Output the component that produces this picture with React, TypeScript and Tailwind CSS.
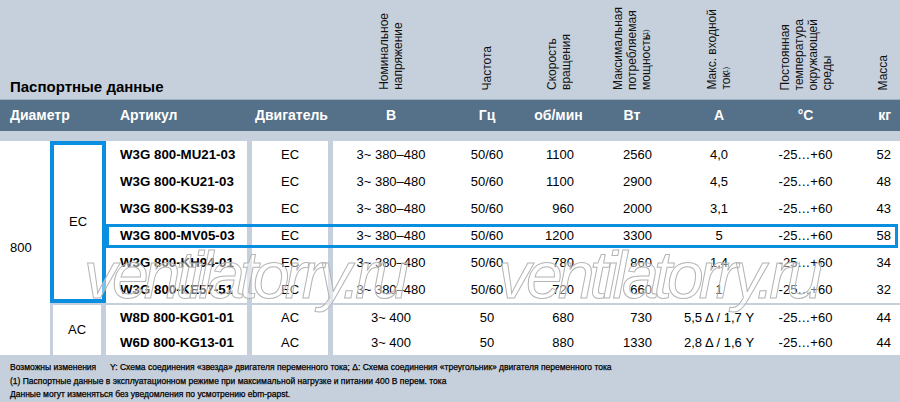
import React from "react";

type R = string[];

const ec: R[] = [
  ["W3G 800-MU21-03", "EC", "3~ 380–480", "50/60", "1100", "2560", "4,0", "-25…+60", "52"],
  ["W3G 800-KU21-03", "EC", "3~ 380–480", "50/60", "1100", "2900", "4,5", "-25…+60", "48"],
  ["W3G 800-KS39-03", "EC", "3~ 380–480", "50/60", "960", "2000", "3,1", "-25…+60", "43"],
  ["W3G 800-MV05-03", "EC", "3~ 380–480", "50/60", "1200", "3300", "5", "-25…+60", "58"],
  ["W3G 800-KH94-01", "EC", "3~ 380–480", "50/60", "780", "860", "1,4", "-25…+60", "34"],
  ["W3G 800-KE57-51", "EC", "3~ 380–480", "50/60", "720", "660", "1", "-25…+60", "32"],
];

const ac: R[] = [
  ["W8D 800-KG01-01", "AC", "3~ 400", "50", "680", "730", "5,5 Δ / 1,7 Y", "-25…+60", "44"],
  ["W6D 800-KG13-01", "AC", "3~ 400", "50", "880", "1330", "2,8 Δ / 1,6 Y", "-25…+60", "44"],
];

function Row({ d, tall, hl }: { d: R; tall: boolean; hl?: boolean }) {
  return (
    <div className={tall ? "relative flex h-[27px]" : "relative flex h-[25px]"}>
      <div className="w-[141px] pl-[14px] flex items-center font-bold text-[13.3px]">{d[0]}</div>
      <div className="w-[5px] bg-[#c6d0dc]" />
      <div className="w-[76px] flex items-center justify-center">{d[1]}</div>
      <div className="w-[5px] bg-[#c6d0dc]" />
      <div className="w-[116px] flex items-center justify-center">{d[2]}</div>
      <div className="w-[76px] flex items-center justify-center">{d[3]}</div>
      <div className="w-[67px] flex items-center justify-end pr-[18px]">{d[4]}</div>
      <div className="w-[80px] flex items-center justify-end pr-[20px]">{d[5]}</div>
      <div className="w-[94px] flex items-center justify-center">{d[6]}</div>
      <div className="w-[79px] flex items-center justify-center">{d[7]}</div>
      <div className="w-[55px] flex items-center justify-end pr-[9px]">{d[8]}</div>
      {hl && (
        <div className="absolute top-[2px] bottom-[1px] left-0 right-[2px] border-[3px] border-[#0a8edf]" />
      )}
    </div>
  );
}

function VHead({ children }: { children: React.ReactNode }) {
  return (
    <div className="[writing-mode:vertical-rl] rotate-180 text-[12px] leading-[14px] text-[#111]">
      {children}
    </div>
  );
}

export default function App() {
  return (
    <div className="relative w-[900px] h-[402px] overflow-hidden bg-white text-black font-['Liberation_Sans',Arial,sans-serif] text-[13px]">
      {/* top header */}
      <div className="flex h-[100px] bg-[#c6d0dc] border-b border-[#9fb0c2]">
        <div className="w-[333px] flex items-end pl-[10px] pb-[3px]">
          <span className="font-bold text-[15px] leading-[18px]">Паспортные данные</span>
        </div>
        <div className="w-[116px] flex items-end justify-center pb-[9px]">
          <VHead>
            Номинальное
            <br />
            напряжение
          </VHead>
        </div>
        <div className="w-[76px] flex items-end justify-center pb-[9px]">
          <VHead>Частота</VHead>
        </div>
        <div className="w-[67px] flex items-end justify-center pb-[9px]">
          <VHead>
            Скорость
            <br />
            вращения
          </VHead>
        </div>
        <div className="w-[80px] flex items-end justify-center pb-[9px]">
          <VHead>
            Максимальная
            <br />
            потребляемая
            <br />
            мощность<sup className="text-[7px]">(1)</sup>
          </VHead>
        </div>
        <div className="w-[94px] flex items-end justify-center pb-[9px]">
          <VHead>
            Макс. входной
            <br />
            ток<sup className="text-[7px]">(1)</sup>
          </VHead>
        </div>
        <div className="w-[79px] flex items-end justify-center pb-[9px]">
          <VHead>
            Постоянная
            <br />
            температура
            <br />
            окружающей
            <br />
            среды
          </VHead>
        </div>
        <div className="w-[55px] flex items-end justify-end pr-[10px] pb-[9px]">
          <VHead>Масса</VHead>
        </div>
      </div>

      {/* dark header bar */}
      <div className="flex h-[31px] bg-[#557089] text-white font-bold text-[14px]">
        <div className="w-[106px] pl-[10px] flex items-center">Диаметр</div>
        <div className="w-[146px] pl-[14px] flex items-center">Артикул</div>
        <div className="w-[81px] pl-[3px] flex items-center">Двигатель</div>
        <div className="w-[116px] flex items-center justify-center">В</div>
        <div className="w-[76px] flex items-center justify-center">Гц</div>
        <div className="w-[67px] flex items-center justify-center">об/мин</div>
        <div className="w-[80px] flex items-center justify-center">Вт</div>
        <div className="w-[94px] flex items-center justify-center">А</div>
        <div className="w-[79px] flex items-center justify-center">°C</div>
        <div className="w-[55px] flex items-center justify-end pr-[9px]">кг</div>
      </div>

      <div className="h-[10px] bg-[#c6d0dc]" />

      {/* body */}
      <div className="flex h-[214px]">
        <div className="w-[50px] flex items-center pl-[10px]">800</div>
        <div className="w-[850px] flex flex-col">
          <div className="flex h-[162px]">
            <div className="w-[56px] border-4 border-[#0a8edf] flex items-center justify-center">EC</div>
            <div className="w-[794px] flex flex-col">
              {ec.map((d, i) => (
                <Row key={i} d={d} tall hl={i === 3} />
              ))}
            </div>
          </div>
          <div className="h-[2px] bg-[#c6d0dc]" />
          <div className="flex h-[50px]">
            <div className="w-[3px] bg-[#c6d0dc]" />
            <div className="w-[48px] flex items-center justify-center">AC</div>
            <div className="w-[5px] bg-[#c6d0dc]" />
            <div className="w-[794px] flex flex-col">
              {ac.map((d, i) => (
                <Row key={i} d={d} tall={false} />
              ))}
            </div>
          </div>
        </div>
      </div>

      {/* footer */}
      <div className="h-[47px] bg-[#c6d0dc] pt-[6px] pl-[10px] text-[8.5px] leading-[13.5px] text-black [-webkit-text-stroke:0.25px_#000]">
        <div className="flex">
          <span className="w-[100px]">Возможны изменения</span>
          <span>
            Y: Схема соединения «звезда» двигателя переменного тока; Δ: Схема соединения «треугольник» двигателя переменного тока
          </span>
        </div>
        <div>(1) Паспортные данные в эксплуатационном режиме при максимальной нагрузке и питании 400 В перем. тока</div>
        <div>Данные могут изменяться без уведомления по усмотрению ebm-papst.</div>
      </div>

      {/* watermark */}
      <div className="pointer-events-none absolute left-[84px] top-[242px] italic text-[66px] leading-[66px] tracking-[-5px] text-[rgba(255,255,255,0.45)] [-webkit-text-stroke:1px_#b4b4b4]">
        ventilatorry.ru
      </div>
      <div className="pointer-events-none absolute left-[498px] top-[242px] italic text-[66px] leading-[66px] tracking-[-5px] text-[rgba(255,255,255,0.45)] [-webkit-text-stroke:1px_#b4b4b4]">
        ventilatorry.ru
      </div>
    </div>
  );
}
